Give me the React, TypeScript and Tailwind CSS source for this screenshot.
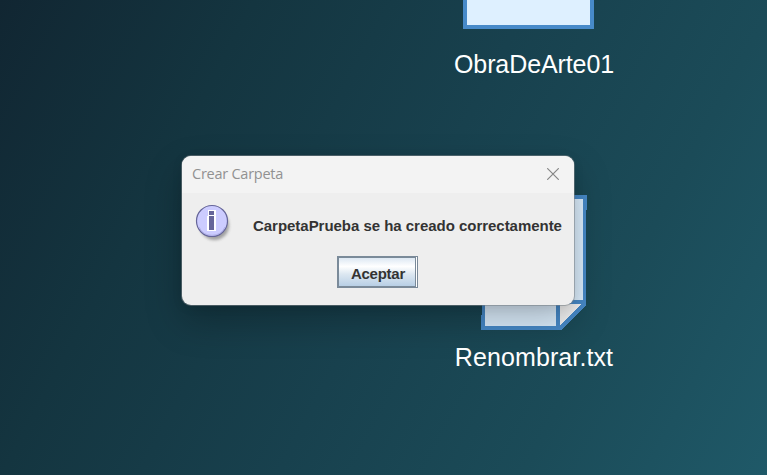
import React from "react";

function ImageFile() {
  return (
    <div className="absolute left-[434px] top-0 flex w-[200px] flex-col items-center">
      <div className="ml-[-11px] h-[29px] w-[131px] border-4 border-t-0 border-[#478ac9] bg-[#def0ff]" />
      <span className="mt-[20px] whitespace-nowrap text-[25px] leading-[30px] tracking-[-0.1px] text-white">ObraDeArte01</span>
    </div>
  );
}

function TextFile() {
  return (
    <div className="absolute left-[434px] top-[195px] flex w-[200px] flex-col items-center">
      <svg width="106" height="135" viewBox="0 0 106 135" shapeRendering="crispEdges">
        <path d="M3 2H104V107L78 133H3Z" fill="#def0ff" />
        <path d="M79 109H101L79 131Z" fill="#f4f4f4" />
        <path d="M0 0H106V15H105V110L80 135H0V120H1V15H0ZM4 4V131H75V105H102V4ZM79 109V130L100 109Z" fill="#478ac9" fillRule="evenodd" />
      </svg>
      <span className="mt-[12px] whitespace-nowrap text-[25px] leading-[30px] tracking-[0.1px] text-white">Renombrar.txt</span>
    </div>
  );
}

function InfoIcon() {
  return (
    <svg className="shrink-0" width="44" height="44" viewBox="0 0 44 44">
      <defs>
        <filter id="soft" x="-30%" y="-30%" width="160%" height="160%">
          <feGaussianBlur stdDeviation="1.8" />
        </filter>
      </defs>
      <circle cx="20.5" cy="24.5" r="14.5" fill="#777" opacity=".65" filter="url(#soft)" />
      <circle cx="18" cy="20" r="15.5" fill="#ccccff" stroke="#666699" strokeWidth="1.2" />
      <path d="M5 26A14.3 14.3 0 0 0 31 26" fill="none" stroke="#b0b0e8" />
      <path d="M14 9H22V30H13V15H14Z" fill="#fff" />
      <path d="M15 10H20V14H15ZM15 15H20V29H15Z" fill="#666699" />
    </svg>
  );
}

function Dialog() {
  return (
    <div className="absolute left-[182px] top-[156px] flex h-[149px] w-[392px] flex-col overflow-hidden rounded-[9px] bg-[#eeeeee] shadow-[0_0_0_1px_rgba(120,130,135,0.55),0_16px_36px_rgba(0,0,0,0.26),0_2px_12px_rgba(0,0,0,0.08)]">
      <div className="flex h-[37px] shrink-0 items-center justify-between bg-[#f3f3f3] pl-[10px] pr-[15px]">
        <span className="mb-[2px] font-['Open_Sans','Noto_Sans',sans-serif] text-[14.5px] leading-5 tracking-[-0.25px] text-[#919191]">Crear Carpeta</span>
        <svg className="mb-[2px]" width="12" height="12" viewBox="0 0 12 12" fill="none" stroke="#858585" strokeWidth="1.15">
          <path d="M.2 .2L11.8 11.8M11.8 .2L.2 11.8" />
        </svg>
      </div>
      <div className="flex h-[56px] shrink-0 items-start pl-[12px] pt-[8px]">
        <InfoIcon />
        <span className="ml-[15px] mt-[15px] whitespace-nowrap text-[15px] font-bold leading-[20px] tracking-[-0.03px] text-[#333333]">CarpetaPrueba se ha creado correctamente</span>
      </div>
      <div className="mt-[7px] flex pl-[155px]">
        <button className="flex h-[32px] w-[81px] border border-[#7a8a99] bg-white pr-px">
          <span className="flex h-full w-full items-center justify-center border border-[#7a8a99] bg-[linear-gradient(180deg,#dde8f3_0%,#ffffff_30%,#dce7f1_58%,#b8cfe5_100%)] pl-[2px] pt-[4px] text-[15px] font-bold tracking-[-0.25px] text-[#333333]">Aceptar</span>
        </button>
      </div>
    </div>
  );
}

export default function App() {
  return (
    <main className="relative h-[475px] w-[767px] overflow-hidden bg-[linear-gradient(118deg,#112632_0%,#143540_25%,#18414e_52%,#1b4b58_76%,#1f5968_100%)] font-['Liberation_Sans',Arial,sans-serif]">
      <ImageFile />
      <TextFile />
      <Dialog />
    </main>
  );
}
